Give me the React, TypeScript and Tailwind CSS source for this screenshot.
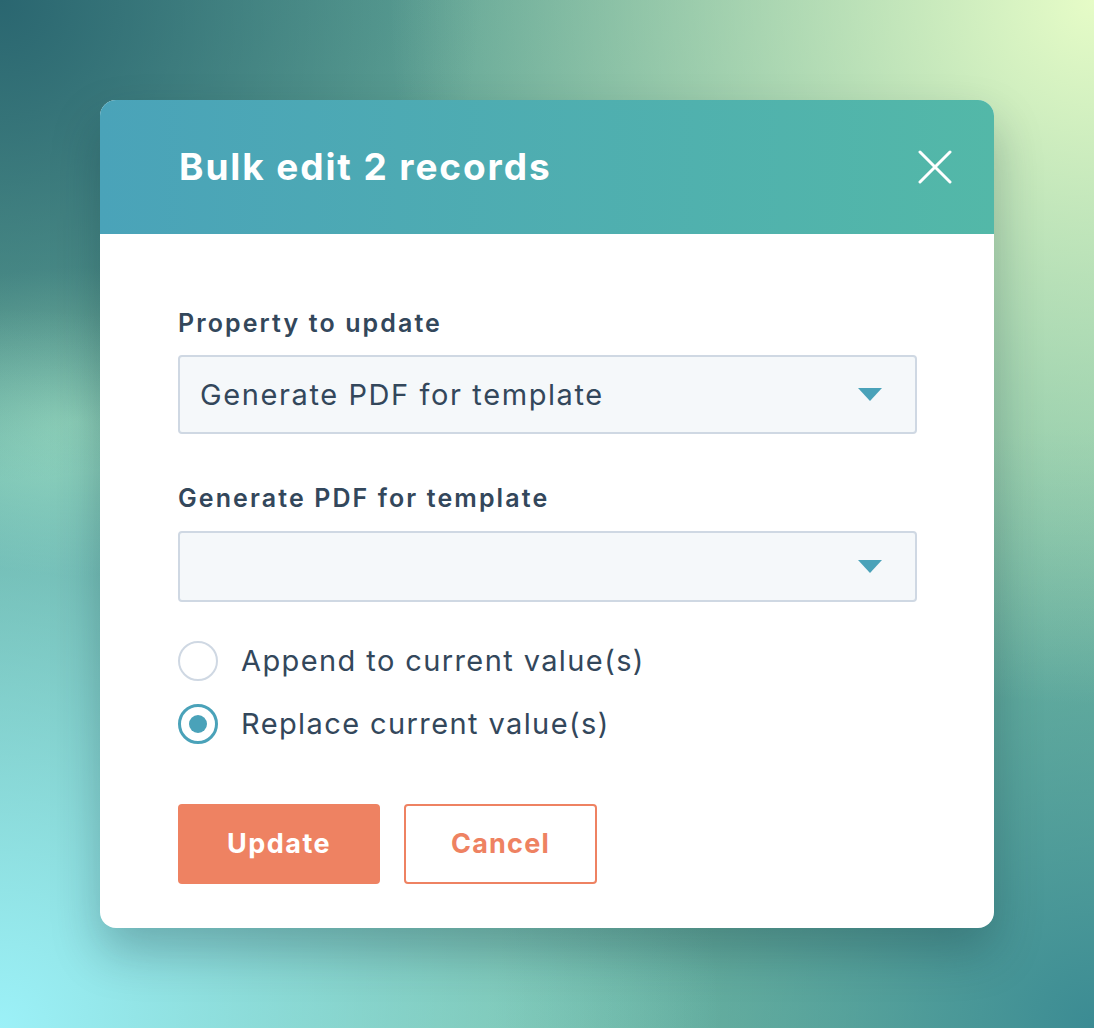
import { useState } from 'react';

const FONT = "font-['Inter','Noto_Sans',sans-serif]";

function Caret() {
  return (
    <svg width="24" height="13" viewBox="0 0 24 13" className="shrink-0">
      <path d="M0 0 L24 0 L12 13 Z" fill="#4aa2b9" />
    </svg>
  );
}

function Radio({ checked, label, onClick }: { checked: boolean; label: string; onClick: () => void }) {
  return (
    <button onClick={onClick} className="flex items-center gap-[23px] h-[40px] text-left">
      <span
        className={`flex items-center justify-center w-[40px] h-[40px] rounded-full bg-white ${
          checked ? 'border-[3px] border-[#4aa2b9]' : 'border-2 border-[#cfd8e3]'
        }`}
      >
        {checked && <span className="w-[18px] h-[18px] rounded-full bg-[#4aa2b9]" />}
      </span>
      <span className="text-[29px] text-[#33475b] tracking-[1.4px]">{label}</span>
    </button>
  );
}

export default function App() {
  const [mode, setMode] = useState<'append' | 'replace'>('replace');

  return (
    <div
      className={`${FONT} w-full h-[1028px] pt-[100px] pl-[100px] bg-[#5ea9a2] bg-[radial-gradient(circle_at_100%_0%,#e6fcc7_0%,rgba(230,252,199,0)_47%),radial-gradient(circle_at_0%_100%,#9cf1f8_0%,rgba(156,241,248,0)_48%),radial-gradient(circle_at_0%_0%,#2a6670_0%,rgba(42,102,112,0)_32%),radial-gradient(circle_at_100%_100%,#3b8b93_0%,rgba(59,139,147,0)_40%),radial-gradient(ellipse_at_7%_41%,#93d2b2_0%,rgba(147,210,178,0)_18%),linear-gradient(135deg,#54988f,#82c8aa)]`}
    >
      <div className="w-[894px] rounded-[16px] overflow-hidden bg-white shadow-[0_24px_48px_rgba(10,40,50,0.28)]">
        {/* Header */}
        <div className="h-[134px] flex items-center justify-between pl-[79px] pr-[42px] bg-[linear-gradient(90deg,#4aa3b9,#53b8a8)]">
          <h1 className="text-[37px] font-bold text-white tracking-[1.9px]">Bulk edit 2 records</h1>
          <button className="w-[34px] h-[34px] flex items-center justify-center">
            <svg width="34" height="34" viewBox="0 0 34 34">
              <path d="M2 2 L32 32 M32 2 L2 32" stroke="white" strokeWidth="3" strokeLinecap="round" />
            </svg>
          </button>
        </div>

        {/* Body */}
        <div className="px-[78px] pt-[73px] pb-[44px]">
          <label className="block text-[25px] leading-[32px] font-semibold text-[#33475b] tracking-[2.1px] mb-[16px]">
            Property to update
          </label>
          <div className="h-[79px] w-[739px] flex items-center justify-between pl-[20px] pr-[33px] rounded-[4px] border-2 border-[#cfd8e3] bg-[#f5f8fa]">
            <span className="text-[29px] text-[#33475b] tracking-[1.6px]">Generate PDF for template</span>
            <Caret />
          </div>

          <label className="block mt-[48px] text-[25px] leading-[32px] font-semibold text-[#33475b] tracking-[2.1px] mb-[17px]">
            Generate PDF for template
          </label>
          <div className="h-[71px] w-[739px] flex items-center justify-end pr-[33px] rounded-[4px] border-2 border-[#cfd8e3] bg-[#f5f8fa]">
            <Caret />
          </div>

          <div className="mt-[39px] flex flex-col gap-[23px] items-start">
            <Radio checked={mode === 'append'} label="Append to current value(s)" onClick={() => setMode('append')} />
            <Radio checked={mode === 'replace'} label="Replace current value(s)" onClick={() => setMode('replace')} />
          </div>

          <div className="mt-[60px] flex gap-[24px]">
            <button className="w-[202px] h-[80px] rounded-[4px] bg-[#ee8262] text-white text-[27px] font-bold tracking-[1.5px]">
              Update
            </button>
            <button className="w-[193px] h-[80px] rounded-[4px] border-2 border-[#ee8262] bg-white text-[#ee8262] text-[27px] font-bold tracking-[1.2px]">
              Cancel
            </button>
          </div>
        </div>
      </div>
    </div>
  );
}
